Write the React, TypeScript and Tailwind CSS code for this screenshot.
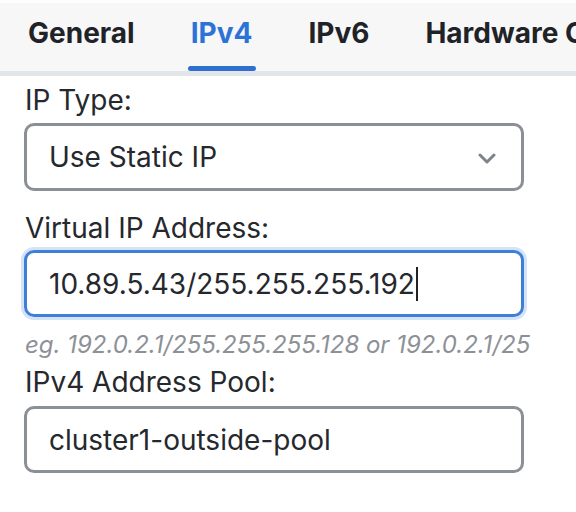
const tabs = ["General", "IPv4", "IPv6", "Hardware Configuration"];

export default function App() {
  return (
    <div className="w-[576px] h-[512px] overflow-hidden bg-white text-[#25282c] font-['Inter',sans-serif]">
      {/* tab strip */}
      <div className="h-[76px] bg-[#f7f7f8] border-t-[3px] border-t-[#fdfdfd] border-b-[5px] border-b-[#e3e6e9] flex gap-[56px] pl-[28px] whitespace-nowrap overflow-hidden">
        {tabs.map((t) => {
          const active = t === "IPv4";
          return (
            <div key={t} className="relative flex items-center h-full pb-[9px]">
              <span className={`text-[28px] font-bold ${active ? "text-[#2d72d6]" : "text-[#1f2328]"}`}>{t}</span>
              {active && <div className="absolute left-[-3px] right-[-4px] bottom-0 h-[5px] rounded-full bg-[#2f6fd0]" />}
            </div>
          );
        })}
      </div>

      <div className="pl-[24px] w-[524px] flex flex-col">
        <label className="mt-[7px] text-[28px] leading-[34px] pl-[1px]">IP Type:</label>
        <div className="mt-[6px] h-[68px] border-[3px] border-[#8b9096] rounded-[10px] flex items-center justify-between pl-[22px] pr-[25px]">
          <span className="text-[28px]">Use Static IP</span>
          <svg width="18" height="11" viewBox="0 0 18 11" fill="none" className="mt-[2px]">
            <polyline points="2,2 9,9 16,2" stroke="#7d838a" strokeWidth="3" strokeLinecap="round" strokeLinejoin="round" />
          </svg>
        </div>

        <label className="mt-[20px] text-[28px] leading-[34px] pl-[1px]">Virtual IP Address:</label>
        <div className="mt-[5px] h-[67px] border-[3px] border-[#3f7fd8] rounded-[10px] shadow-[0_0_0_3px_#d3e3f8] flex items-center pl-[22px]">
          <span className="text-[28px]">10.89.5.43/255.255.255.192</span>
          <span className="ml-[1px] w-[2px] h-[34px] bg-[#1f2328]" />
        </div>
        <p className="mt-[14px] text-[24px] leading-[28px] italic text-[#8d9197] pl-[1px] whitespace-nowrap">
          eg. 192.0.2.1/255.255.255.128 or 192.0.2.1/25
        </p>

        <label className="mt-[6px] text-[28px] leading-[34px] pl-[1px]">IPv4 Address Pool:</label>
        <div className="mt-[7px] h-[67px] border-[3px] border-[#8b9096] rounded-[10px] flex items-center pl-[22px]">
          <span className="text-[28px]">cluster1-outside-pool</span>
        </div>
      </div>
    </div>
  );
}
